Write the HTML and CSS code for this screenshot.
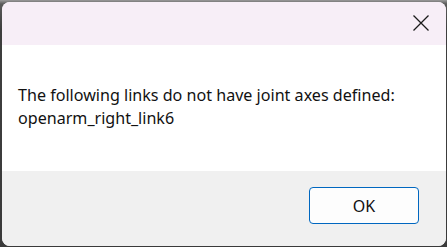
FILE: index.html
```html
<!DOCTYPE html>
<html>
<head>
<meta charset="utf-8">
<link rel="stylesheet" href="styles.css">
</head>
<body>
<div class="window">
  <div class="titlebar">
    <button class="close" aria-label="Close">
      <svg width="16" height="16" viewBox="0 0 16 16"><path d="M0.5 0.5 L15.5 15.5 M15.5 0.5 L0.5 15.5" stroke="#1b1b1b" stroke-width="1.3" fill="none"/></svg>
    </button>
  </div>
  <div class="content">
    <p class="message">The following links do not have joint axes defined:<br>openarm_right_link6</p>
  </div>
  <div class="footer">
    <button class="ok">OK</button>
  </div>
</div>
</body>
</html>
```
FILE: styles.css
```css
html, body {
  margin: 0;
  padding: 0;
}
body {
  width: 447px;
  height: 247px;
  background: linear-gradient(180deg, #9a9a9a 0px, #5a5a5a 4px, #3e3e3e 30px, #3a3a3a 100%);
  overflow: hidden;
  font-family: "Noto Sans", "Open Sans", sans-serif;
}
.window {
  margin: 2px 1px 1px 2px;
  width: 444px;
  height: 244px;
  border-radius: 8px;
  overflow: hidden;
  display: flex;
  flex-direction: column;
  background: #ffffff;
}
.titlebar {
  height: 43px;
  background: #f7eef7;
  display: flex;
  justify-content: flex-end;
  align-items: flex-start;
}
.close {
  margin: 13px 17px 0 0;
  padding: 0;
  border: 0;
  background: transparent;
  width: 16px;
  height: 16px;
  display: block;
}
.close svg {
  display: block;
}
.content {
  height: 126px;
  background: #ffffff;
  padding: 0 16px;
  box-sizing: border-box;
}
.message {
  margin: 0;
  padding-top: 39px;
  font-size: 16.1px;
  line-height: 23px;
  color: #111111;
}
.footer {
  flex: 1;
  background: #f0f0f0;
  display: flex;
  justify-content: flex-end;
  align-items: flex-start;
}
.ok {
  margin: 16px 27px 0 0;
  width: 110px;
  height: 37px;
  box-sizing: border-box;
  border: 1px solid #0067c0;
  border-radius: 4px;
  background: #fdfdfd;
  font-family: "Noto Sans", "Open Sans", sans-serif;
  font-size: 16px;
  color: #111111;
  padding: 0;
}
```
